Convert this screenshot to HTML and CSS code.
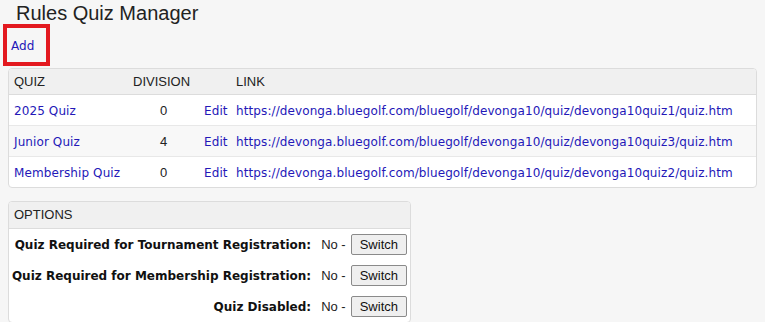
FILE: index.html
```html
<!DOCTYPE html>
<html lang="en">
<head>
  <meta charset="UTF-8">
  <title>Rules Quiz Manager</title>
  <link rel="stylesheet" href="styles.css">
</head>
<body>
  <h1 class="title">Rules Quiz Manager</h1>
  <div class="add-wrap">
    <a class="add" href="#">Add</a>
  </div>

  <div class="box quiz-box">
    <table class="quiz-table">
      <thead>
        <tr>
          <th class="c-quiz">QUIZ</th>
          <th class="c-div">DIVISION</th>
          <th class="c-edit"></th>
          <th class="c-link">LINK</th>
        </tr>
      </thead>
      <tbody>
        <tr>
          <td class="c-quiz"><a href="#">2025 Quiz</a></td>
          <td class="c-div num">0</td>
          <td class="c-edit"><a href="#">Edit</a></td>
          <td class="c-link"><a href="#">https://devonga.bluegolf.com/bluegolf/devonga10/quiz/devonga10quiz1/quiz.htm</a></td>
        </tr>
        <tr class="alt">
          <td class="c-quiz"><a href="#">Junior Quiz</a></td>
          <td class="c-div num">4</td>
          <td class="c-edit"><a href="#">Edit</a></td>
          <td class="c-link"><a href="#">https://devonga.bluegolf.com/bluegolf/devonga10/quiz/devonga10quiz3/quiz.htm</a></td>
        </tr>
        <tr>
          <td class="c-quiz"><a href="#">Membership Quiz</a></td>
          <td class="c-div num">0</td>
          <td class="c-edit"><a href="#">Edit</a></td>
          <td class="c-link"><a href="#">https://devonga.bluegolf.com/bluegolf/devonga10/quiz/devonga10quiz2/quiz.htm</a></td>
        </tr>
      </tbody>
    </table>
  </div>

  <div class="box options-box">
    <div class="box-head">OPTIONS</div>
    <div class="opt-row">
      <span class="opt-label">Quiz Required for Tournament Registration:</span>
      <span class="opt-val">No -</span>
      <button class="switch">Switch</button>
    </div>
    <div class="opt-row">
      <span class="opt-label">Quiz Required for Membership Registration:</span>
      <span class="opt-val">No -</span>
      <button class="switch">Switch</button>
    </div>
    <div class="opt-row">
      <span class="opt-label">Quiz Disabled:</span>
      <span class="opt-val">No -</span>
      <button class="switch">Switch</button>
    </div>
  </div>
</body>
</html>
```

FILE: styles.css
```css
body { margin: 0; padding: 0 8px; background: #f6f6f6; font-family: "Liberation Sans", Arial, sans-serif; font-size: 13px; color: #222; }
a { color: #2418b8; text-decoration: none; font-family: "DejaVu Sans", Verdana, sans-serif; font-size: 12px; letter-spacing: 0.1px; }

.title { margin: 0; padding: 3px 0 0 8px; height: 21px; font-size: 20px; font-weight: normal; color: #222; line-height: 21px; }

.add-wrap { margin: 0 0 0 -5px; width: 39px; height: 34px; border: 4px solid #e3191f; display: flex; align-items: center; }
.add { padding-left: 4px; padding-top: 2px; }

.box { background: #fff; border: 1px solid #dcdcdc; border-radius: 4px; overflow: hidden; }
.quiz-box { margin-top: 2px; width: 747px; }
.options-box { margin-top: 13px; width: 401px; }

.quiz-table { width: 100%; border-collapse: collapse; table-layout: fixed; }
.quiz-table th { background: #f0f0f0; font-weight: normal; text-align: left; height: 25px; padding: 0 5px; border-bottom: 1px solid #dcdcdc; }
.quiz-table td { height: 30px; padding: 0 5px; border-bottom: 1px solid #e8e8e8; white-space: nowrap; }
.quiz-table tbody tr:last-child td { border-bottom: none; }
.quiz-table tr.alt td { background: #f8f8f8; }
.c-quiz { width: 109px; }
.c-div { width: 61px; }
.num { text-align: center; }
.c-edit { width: 22px; }

.box-head { background: #f0f0f0; height: 26px; line-height: 26px; padding-left: 5px; border-bottom: 1px solid #dcdcdc; }
.opt-row { height: 31px; display: flex; align-items: center; justify-content: flex-end; padding-right: 3px; }
.opt-label { font-family: "DejaVu Sans", Verdana, sans-serif; font-size: 12px; font-weight: bold; color: #111; }
.opt-val { margin-left: 10px; }
.switch { margin-left: 5px; font-family: "Liberation Sans", Arial, sans-serif; font-size: 13px; color: #111; background: #efefef; border: 1px solid #8a8a8a; border-radius: 2px; height: 21px; padding: 0 8px; }
```
